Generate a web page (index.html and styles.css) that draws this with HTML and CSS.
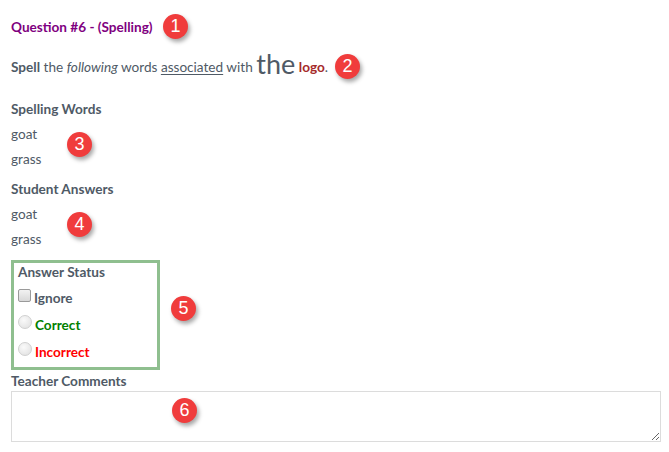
FILE: index.html
```html
<!DOCTYPE html>
<html>
<head>
<meta charset="utf-8">
<link rel="stylesheet" href="styles.css">
</head>
<body>
<div class="page">
  <div class="title">Question #6 - (Spelling)</div>
  <p class="prompt"><b>Spell</b> the <i>following</i> words <u>associated</u> with <span class="big">the</span> <b class="logo">logo</b>.</p>

  <div class="label">Spelling Words</div>
  <div class="word">goat</div>
  <div class="word">grass</div>

  <div class="label label-gap">Student Answers</div>
  <div class="word">goat</div>
  <div class="word">grass</div>

  <div class="status">
    <div class="status-title">Answer Status</div>
    <label class="opt"><span class="box"></span><span>Ignore</span></label>
    <label class="opt correct"><span class="radio"></span><span>Correct</span></label>
    <label class="opt incorrect"><span class="radio"></span><span>Incorrect</span></label>
  </div>

  <div class="comments-label">Teacher Comments</div>
  <textarea class="comments"></textarea>

  <span class="badge b1">1</span>
  <span class="badge b2">2</span>
  <span class="badge b3">3</span>
  <span class="badge b4">4</span>
  <span class="badge b5">5</span>
  <span class="badge b6">6</span>
</div>
</body>
</html>
```
FILE: styles.css
```css
html, body {
  margin: 0;
  padding: 0;
  background: #fff;
}
.page {
  position: relative;
  padding: 17px 8px 0 11px;
  font-family: "Lato", "Open Sans", sans-serif;
  font-size: 13.6px;
  color: #4f5a66;
  height: 452px;
  box-sizing: border-box;
}
.title {
  line-height: 20px;
  font-weight: 700;
  color: #800080;
}
.prompt {
  margin: 15px 0 0;
  line-height: 30px;
  height: 30px;
}
.prompt b { font-weight: 700; }
.prompt u { text-underline-offset: 2px; }
.big {
  font-size: 27px;
  vertical-align: -2px;
  line-height: 20px;
}
.logo {
  color: #a52a2a;
}
.label {
  margin-top: 14.5px;
  line-height: 25px;
  font-weight: 700;
}
.label-gap { margin-top: 5px; }
.word {
  line-height: 25px;
}
.status {
  margin-top: 8.5px;
  width: 149px;
  box-sizing: border-box;
  border: 3px solid #8fbf8f;
  padding: 0 0 2px 4px;
}
.status-title {
  font-weight: 700;
  line-height: 18px;
  margin-bottom: 3px;
}
.opt {
  display: flex;
  align-items: center;
  gap: 3px;
  height: 27px;
  font-weight: 700;
}
.correct { color: #008000; }
.incorrect { color: #ff0000; }
.box {
  width: 11px;
  height: 11px;
  border: 1px solid #9a9a9a;
  border-radius: 2px;
  background: linear-gradient(#f2f2f2, #d8d8d8);
  margin-top: -4px;
}
.radio {
  width: 12px;
  height: 12px;
  border: 1px solid #d0d0d0;
  border-radius: 50%;
  background: radial-gradient(circle at 40% 35%, #fafafa, #dedede);
  margin-top: -5px;
}
.comments-label {
  margin-top: 2px;
  line-height: 18px;
  font-weight: 700;
}
.comments {
  display: block;
  margin-top: 1px;
  width: 650px;
  height: 51px;
  box-sizing: border-box;
  border: 1px solid #dcdcdc;
  resize: vertical;
  padding: 2px;
  font-family: inherit;
}
.badge {
  position: absolute;
  width: 25px;
  height: 25px;
  border-radius: 50%;
  background: #f03c3c;
  color: #fff;
  font-family: "Liberation Sans", Arial, sans-serif;
  font-size: 18px;
  line-height: 25px;
  text-align: center;
  box-shadow: 2px 3px 4px rgba(0,0,0,0.35);
}
.b1 { left: 163px; top: 14px; }
.b2 { left: 335px; top: 54px; }
.b3 { left: 67px; top: 132px; }
.b4 { left: 67px; top: 212px; }
.b5 { left: 171px; top: 296px; }
.b6 { left: 172px; top: 398px; }
```
